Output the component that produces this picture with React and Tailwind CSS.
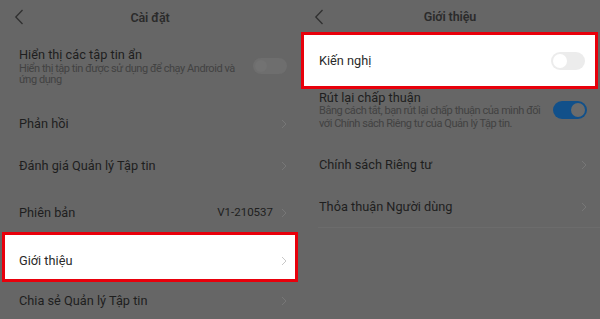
const Chevron = ({ light }) => (
    <svg width="6" height="10" viewBox="0 0 6 10" className="shrink-0">
        <path d="M1 1l4 4-4 4" fill="none" stroke={light ? "#c8c8c8" : "#777777"} strokeWidth="1" />
    </svg>
);

const Back = () => (
    <svg width="10" height="16" viewBox="0 0 10 16" className="shrink-0">
        <path d="M8.5 1L1.8 8l6.7 7" fill="none" stroke="#303030" strokeWidth="1.3" />
    </svg>
);

const Toggle = ({ variant }) => {
    if (variant === "on") {
        return (
            <div className="w-[34px] h-[18px] rounded-full bg-[#11508a] flex items-center justify-end px-[2px] shrink-0">
                <div className="w-[14px] h-[14px] rounded-full bg-[#6b6b6b]" />
            </div>
        );
    }
    if (variant === "light") {
        return (
            <div className="w-[34px] h-[18px] rounded-full bg-[#ececec] flex items-center px-[2px] shrink-0">
                <div className="w-[14px] h-[14px] rounded-full bg-white" />
            </div>
        );
    }
    return (
        <div className="w-[34px] h-[16px] rounded-full bg-[#6e6e6e] flex items-center px-[2px] shrink-0">
            <div className="w-[12px] h-[12px] rounded-full bg-[#727272]" />
        </div>
    );
};

const Header = ({ title, h }) => (
    <div className={`relative flex items-center justify-center pt-[2px] ${h}`}>
        <div className="absolute left-[14px] top-[9px]">
            <Back />
        </div>
        <span className="text-[12.5px] font-semibold tracking-[-0.1px] text-[#2b2b2b]">{title}</span>
    </div>
);

const Row = ({ label, value, h, pl = "pl-[19px]" }) => (
    <div className={`flex items-center pr-[13px] ${pl} ${h}`}>
        <span className="flex-1 text-[12.75px] text-[#1e1e1e]">{label}</span>
        {value && <span className="text-[11.5px] text-[#1e1e1e] mr-[8px]">{value}</span>}
        <Chevron />
    </div>
);

const Highlight = ({ children, h, className = "" }) => (
    <div className={`border-[3px] border-[#e8000b] bg-white flex items-center ${h} ${className}`}>
        {children}
    </div>
);

export default function App() {
    return (
        <div
            className="w-[600px] h-[319px] bg-[#666666] flex overflow-hidden"
            style={{ fontFamily: "Roboto, 'Noto Sans', sans-serif" }}
        >
            {/* left: settings */}
            <div className="w-[300px] flex flex-col">
                <Header title="Cài đặt" h="h-[35px] shrink-0" />
                <div className="h-[68px] shrink-0 flex items-start pl-[19px] pr-[13px] pt-[12px]">
                    <div className="flex-1">
                        <div className="text-[12.75px] text-[#1e1e1e] leading-[16px]">Hiển thị các tập tin ẩn</div>
                        <div className="text-[11px] tracking-[-0.45px] text-[#424242] leading-[11px] pr-[10px]">
                            Hiển thị tập tin được sử dụng để chạy Android và ứng dụng
                        </div>
                    </div>
                    <div className="mt-[11px]">
                        <Toggle />
                    </div>
                </div>
                <Row label="Phản hồi" h="h-[42px] shrink-0" />
                <Row label="Đánh giá Quản lý Tập tin" h="h-[41px] shrink-0" />
                <Row label="Phiên bản" value="V1-210537" h="h-[46px] pt-[8px] shrink-0" />
                <Highlight h="h-[50px] pt-[8px] shrink-0" className="mx-[2px] pl-[14px] pr-[8px]">
                    <span className="flex-1 text-[12.75px] text-[#2a2a2a]">Giới thiệu</span>
                    <Chevron light />
                </Highlight>
                <Row label="Chia sẻ Quản lý Tập tin" h="h-[38px] shrink-0" />
            </div>

            {/* right: about */}
            <div className="w-[300px] flex flex-col">
                <Header title="Giới thiệu" h="h-[32px] shrink-0" />
                <Highlight h="h-[57px] shrink-0" className="ml-[1px] mr-[2px] pl-[15px] pr-[10px]">
                    <span className="flex-1 text-[12.75px] text-[#2a2a2a]">Kiến nghị</span>
                    <Toggle variant="light" />
                </Highlight>
                <div className="h-[55px] shrink-0 flex items-start pl-[19px] pr-[13px] pt-[1px]">
                    <div className="flex-1">
                        <div className="text-[12.75px] text-[#1e1e1e] leading-[15px]">Rút lại chấp thuận</div>
                        <div className="text-[11px] tracking-[-0.45px] text-[#424242] leading-[13px] mt-[-1px]">
                            Bằng cách tắt, bạn rút lại chấp thuận của mình đối với Chính sách Riêng tư của Quản lý Tập tin.
                        </div>
                    </div>
                    <div className="mt-[11px] ml-[8px]">
                        <Toggle variant="on" />
                    </div>
                </div>
                <Row label="Chính sách Riêng tư" h="h-[42px] shrink-0" />
                <div className="ml-[18px] border-b border-[#6c6c6c]">
                    <Row label="Thỏa thuận Người dùng" h="h-[41px]" pl="pl-[1px]" />
                </div>
            </div>
        </div>
    );
}
